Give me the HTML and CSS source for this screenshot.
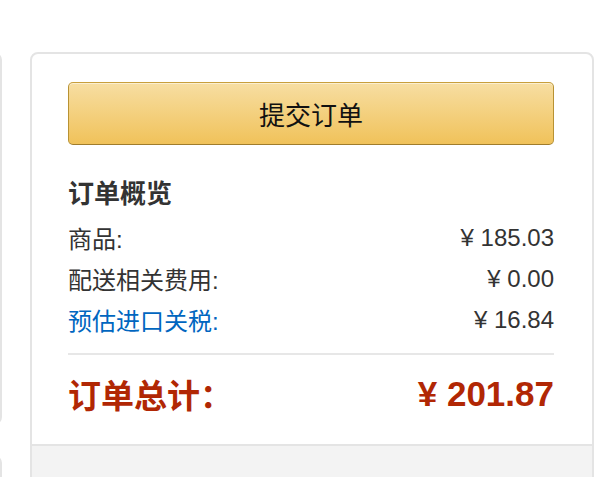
FILE: index.html
```html
<!DOCTYPE html>
<html lang="zh-CN">
<head>
<meta charset="utf-8">
<title>订单概览</title>
<link rel="stylesheet" href="styles.css">
</head>
<body>
<div class="page">
  <div class="side">
    <div class="side-box side-box-top"></div>
    <div class="side-box side-box-bottom"></div>
  </div>
  <div class="card">
    <div class="card-main">
      <button class="place-btn" type="button">提交订单</button>
      <h3 class="summary-title">订单概览</h3>
      <div class="row"><span>商品:</span><span class="amt">¥ 185.03</span></div>
      <div class="row"><span>配送相关费用:</span><span class="amt">¥ 0.00</span></div>
      <div class="row"><span class="link">预估进口关税:</span><span class="amt">¥ 16.84</span></div>
      <hr class="divider">
      <div class="total"><span class="total-label">订单总计：</span><span class="total-amt">¥ 201.87</span></div>
    </div>
    <div class="card-foot"></div>
  </div>
</div>
</body>
</html>
```

FILE: styles.css
```css
html, body {
  margin: 0;
  padding: 0;
  background: #fff;
}
body {
  font-family: "Liberation Sans", "Noto Sans CJK SC", sans-serif;
  color: #333;
  overflow: hidden;
}
.page {
  display: flex;
  align-items: flex-start;
  padding-top: 52px;
  gap: 28px;
}
.side {
  width: 100px;
  margin-left: -98px;
  display: flex;
  flex-direction: column;
  gap: 30px;
  flex: none;
}
.side-box {
  border: 2px solid #e4e4e4;
  border-radius: 8px;
  box-sizing: border-box;
}
.side-box-top { height: 373px; }
.side-box-bottom { height: 100px; }
.card {
  width: 564px;
  flex: none;
  box-sizing: border-box;
  border: 2px solid #e4e4e4;
  border-radius: 8px;
  overflow: hidden;
}
.card-main {
  padding: 28px 38px 28px 36px;
  display: flex;
  flex-direction: column;
}
.place-btn {
  height: 63px;
  width: 100%;
  border: 1px solid;
  border-color: #c89f3c #b89233 #a07c2c;
  border-radius: 5px;
  background: linear-gradient(to bottom, #f7dea2, #f0c25a);
  box-shadow: inset 0 1px 0 rgba(255,255,255,0.5);
  font-family: "Liberation Sans", "Noto Sans CJK SC", sans-serif;
  font-size: 26px;
  color: #111;
  padding: 0;
  cursor: pointer;
}
.summary-title {
  margin: 32px 0 6px;
  font-size: 26px;
  line-height: 34px;
  font-weight: 700;
  color: #333;
}
.row {
  display: flex;
  justify-content: space-between;
  align-items: center;
  height: 41px;
  font-size: 24px;
}
.link { color: #0066c0; }
.amt { color: #333; }
.divider {
  margin: 13px 0 0;
  border: 0;
  height: 2px;
  background: #e7e7e7;
}
.total {
  margin-top: 17px;
  display: flex;
  justify-content: space-between;
  align-items: center;
  height: 44px;
  color: #b12704;
  font-weight: 700;
}
.total-label { font-size: 33px; }
.total-amt { font-size: 35px; }
.card-foot {
  height: 60px;
  background: #f3f3f3;
  border-top: 2px solid #e4e4e4;
}
```
